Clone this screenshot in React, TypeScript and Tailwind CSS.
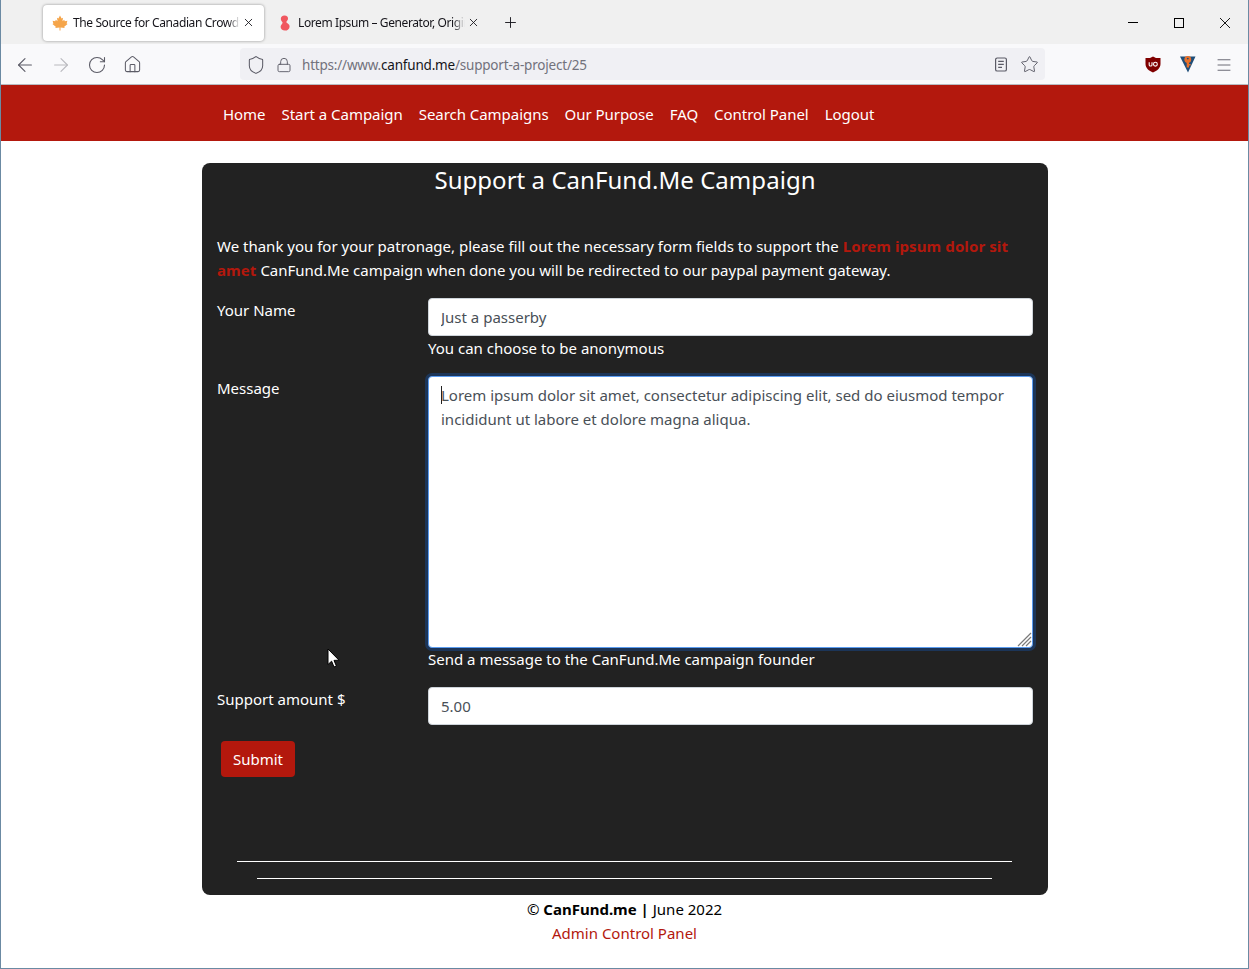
import { ArrowLeft, ArrowRight, RotateCw, Home, Shield, Lock, Star, Menu, X, Plus } from "lucide-react"

const navLinks = ["Home", "Start a Campaign", "Search Campaigns", "Our Purpose", "FAQ", "Control Panel", "Logout"]

function MapleLeaf() {
  return (
    <svg width="16" height="16" viewBox="0 0 16 16" className="shrink-0">
      <path
        d="M8 0.5 L9.6 3.4 L11 2.8 L10.5 6.2 L12.2 4.8 L12.8 6.2 L15.4 5.8 L14.6 8.4 L15.6 9 L12.2 11.8 L12.7 13 L8.5 12.5 L8.5 15.5 L7.5 15.5 L7.5 12.5 L3.3 13 L3.8 11.8 L0.4 9 L1.4 8.4 L0.6 5.8 L3.2 6.2 L3.8 4.8 L5.5 6.2 L5 2.8 L6.4 3.4 Z"
        fill="#f5a54a"
      />
    </svg>
  )
}

function LoremBlob() {
  return (
    <svg width="12" height="16" viewBox="0 0 12 16" className="shrink-0">
      <path
        d="M5.5 0.5 C8 0.5 9.2 2 9 4 C8.8 5.6 7.2 6.2 7.4 7.2 C7.6 8.2 10.6 8.8 10.6 11.4 C10.6 14 8.4 15.6 6 15.6 C3.4 15.6 1.6 14 1.6 11.8 C1.6 9.8 3.6 9 3.6 7.8 C3.6 6.8 1.8 6 1.8 4 C1.8 2 3.2 0.5 5.5 0.5 Z"
        fill="#f0575f"
      />
    </svg>
  )
}

function UBlock() {
  return (
    <svg width="16" height="17" viewBox="0 0 16 17">
      <path d="M8 0.5 L11 2 L15.5 2 L15.5 8 C15.5 12 12 15 8 16.5 C4 15 0.5 12 0.5 8 L0.5 2 L5 2 Z" fill="#800000" />
      <path d="M4.2 6.2 V9 C4.2 10.4 7 10.4 7 9 V6.2" fill="none" stroke="#fff" strokeWidth="1.1" />
      <circle cx="10.4" cy="8.2" r="1.9" fill="none" stroke="#fff" strokeWidth="1.1" />
    </svg>
  )
}

function VaultLogo() {
  return (
    <svg width="16" height="17" viewBox="0 0 16 17">
      <path d="M0 0.5 H15.5 L8 16.5 Z" fill="#1f4e79" />
      <circle cx="7.8" cy="3.4" r="3.4" fill="#e8702a" />
      <path d="M6.7 4 H9 V11.5 H6.7 Z M9 8 H10.6 V9.4 H9 Z" fill="#e8702a" />
      <circle cx="7.8" cy="2.6" r="0.9" fill="#1f4e79" />
    </svg>
  )
}

function ReaderIcon() {
  return (
    <svg width="14" height="15" viewBox="0 0 14 15" fill="none" stroke="#5b5b66" strokeWidth="1.2">
      <rect x="1.6" y="1" width="10.8" height="13" rx="1.6" />
      <path d="M4.2 4.4 H9.8 M4.2 7.4 H9.8 M4.2 10.4 H8" />
    </svg>
  )
}

function Pointer() {
  return (
    <svg width="13" height="20" viewBox="0 0 13 20" className="absolute left-[125px] top-[485px]">
      <path d="M1 1 V16.5 L4.6 13.2 L7 19 L9.4 18 L7 12.4 L12 12.2 Z" fill="#fff" stroke="#000" strokeWidth="1" />
    </svg>
  )
}

function ResizeGrip() {
  return (
    <svg width="15" height="15" viewBox="0 0 15 15" stroke="#7a7a7a" strokeWidth="1.2" className="absolute bottom-[1px] right-[1px]">
      <path d="M1 14 L14 1 M5 14 L14 5 M9 14 L14 9" />
    </svg>
  )
}

export default function App() {
  return (
    <div className="h-[969px] w-[1249px] overflow-hidden border-x border-b border-[#6b8aa3] bg-white font-['Noto_Sans',sans-serif] text-[15px] leading-6 text-white">
      {/* Tab strip */}
      <div className="flex h-11 items-center bg-[#f0f0f0] pl-[42px] pt-[1px] text-[12px] text-[#15141a]">
        <div className="flex h-[36px] w-[221px] items-center rounded bg-white pl-[9px] shadow-[0_0_3px_rgba(0,0,0,0.4)]">
          <MapleLeaf />
          <span className="ml-[5px] w-[167px] overflow-hidden whitespace-nowrap tracking-[-0.4px] [mask-image:linear-gradient(to_left,transparent,black_12px)]">
            The Source for Canadian Crowdfunding
          </span>
          <X size={13} strokeWidth={1.6} className="ml-[2px] shrink-0" />
        </div>
        <div className="flex h-[36px] w-[218px] items-center pl-[15px]">
          <LoremBlob />
          <span className="ml-[7px] w-[167px] overflow-hidden whitespace-nowrap tracking-[-0.4px] [mask-image:linear-gradient(to_left,transparent,black_12px)]">
            Lorem Ipsum – Generator, Origins and Meaning
          </span>
          <X size={13} strokeWidth={1.6} className="ml-[2px] shrink-0" />
        </div>
        <Plus size={17} strokeWidth={1.3} className="ml-[20px]" />
        <div className="ml-auto flex items-center gap-9 pr-[18px]">
          <svg width="10" height="10" viewBox="0 0 10 10" stroke="#000" fill="none"><path d="M0 4.5 H10" /></svg>
          <svg width="10" height="10" viewBox="0 0 10 10" stroke="#000" fill="none"><rect x="0.5" y="0.5" width="9" height="9" /></svg>
          <svg width="10" height="10" viewBox="0 0 10 10" stroke="#000" strokeWidth="0.9" fill="none"><path d="M0 0 L10 10 M10 0 L0 10" /></svg>
        </div>
      </div>

      {/* Toolbar */}
      <div className="flex h-[41px] items-start border-b border-[#b8bcc2] bg-[#f9f9fb] text-[#5b5b66]">
        <div className="flex h-10 items-center gap-[15px] pl-3 pt-[1px]">
          <ArrowLeft size={22} strokeWidth={1.2} className="ml-[1px] -mr-[1px]" />
          <ArrowRight size={22} strokeWidth={1.2} className="text-[#b9b9be]" />
          <RotateCw size={20} strokeWidth={1.3} />
          <Home size={19} strokeWidth={1.3} className="ml-[1px]" />
        </div>
        <div className="ml-[98px] mt-1 flex h-8 w-[805px] items-center rounded bg-[#f0f0f4] pl-[6px] pr-[6px] pt-[1px] text-[13.5px]">
          <Shield size={20} strokeWidth={1.25} />
          <Lock size={16} strokeWidth={1.4} className="ml-[10px]" />
          <span className="ml-[10px] tracking-[-0.2px] text-[#72727c]">
            https://www.<span className="text-[#15141a]">canfund.me</span>/support-a-project/25
          </span>
          <div className="ml-auto flex items-center gap-[12px]">
            <ReaderIcon />
            <Star size={19} strokeWidth={1.2} />
          </div>
        </div>
        <div className="ml-auto flex h-10 items-center gap-[19px] pr-[15px] pt-[1px]">
          <UBlock />
          <VaultLogo />
          <Menu size={18} strokeWidth={1.2} />
        </div>
      </div>

      {/* Site nav */}
      <nav className="flex h-[56px] items-center gap-4 bg-[#b3180d] pl-[222px] pt-[1px] tracking-[-0.04px]">
        {navLinks.map((link) => (
          <a key={link}>{link}</a>
        ))}
      </nav>

      {/* Campaign card */}
      <main className="relative ml-[201px] mt-[22px] flex h-[732px] w-[846px] flex-col rounded-lg bg-[#222222] px-[15px]">
        <h1 className="mt-[1px] text-center text-[24px] leading-[32px] tracking-[0.04px]">Support a CanFund.Me Campaign</h1>
        <p className="mt-[38px]">
          We thank you for your patronage, please fill out the necessary form fields to support the{" "}
          <b className="tracking-[0.1px] text-[#b3180d]">Lorem ipsum dolor sit amet</b> CanFund.Me campaign when done you will be redirected to our paypal payment gateway.
        </p>

        <div className="mt-4 flex">
          <label className="w-[211px]">Your Name</label>
          <div className="w-[605px]">
            <input
              defaultValue="Just a passerby"
              className="h-[38px] w-full rounded border border-[#ced4da] bg-white px-3 text-[#495057] outline-none"
            />
            <div className="h-[25px]">You can choose to be anonymous</div>
          </div>
        </div>

        <div className="mt-[15px] flex">
          <label className="w-[211px]">Message</label>
          <div className="relative w-[605px]">
            <textarea
              defaultValue={"Lorem ipsum dolor sit amet, consectetur adipiscing elit, sed do eiusmod tempor incididunt ut labore et dolore magna aliqua."}
              className="block h-[272px] w-full resize-none rounded border border-[#5b9cf0] bg-white px-3 py-[6px] text-[#495057] shadow-[0_0_0_3px_rgba(13,110,253,0.25)] outline-none"
            />
            <span className="absolute left-[13px] top-[10px] h-[18px] w-px bg-[#222]" />
            <div className="relative h-6 leading-[23px]">Send a message to the CanFund.Me campaign founder</div>
            <div className="absolute left-0 top-0 h-[272px] w-full">
              <ResizeGrip />
            </div>
          </div>
        </div>

        <div className="mt-[15px] flex">
          <label className="w-[211px]">Support amount $</label>
          <input
            defaultValue="5.00"
            className="h-[38px] w-[605px] rounded border border-[#ced4da] bg-white px-3 text-[#495057] outline-none"
          />
        </div>

        <button className="mt-4 ml-1 h-9 w-[74px] rounded bg-[#b3180d]">Submit</button>

        <hr className="mt-[84px] ml-[20px] w-[775px] border-white" />
        <hr className="ml-[40px] mt-4 w-[735px] border-white" />
        <Pointer />
      </main>

      {/* Footer */}
      <footer className="mt-[2px] text-center text-black">
        <div>
          © <b>CanFund.me |</b> June 2022
        </div>
        <a className="text-[#b3180d]">Admin Control Panel</a>
      </footer>
    </div>
  )
}
